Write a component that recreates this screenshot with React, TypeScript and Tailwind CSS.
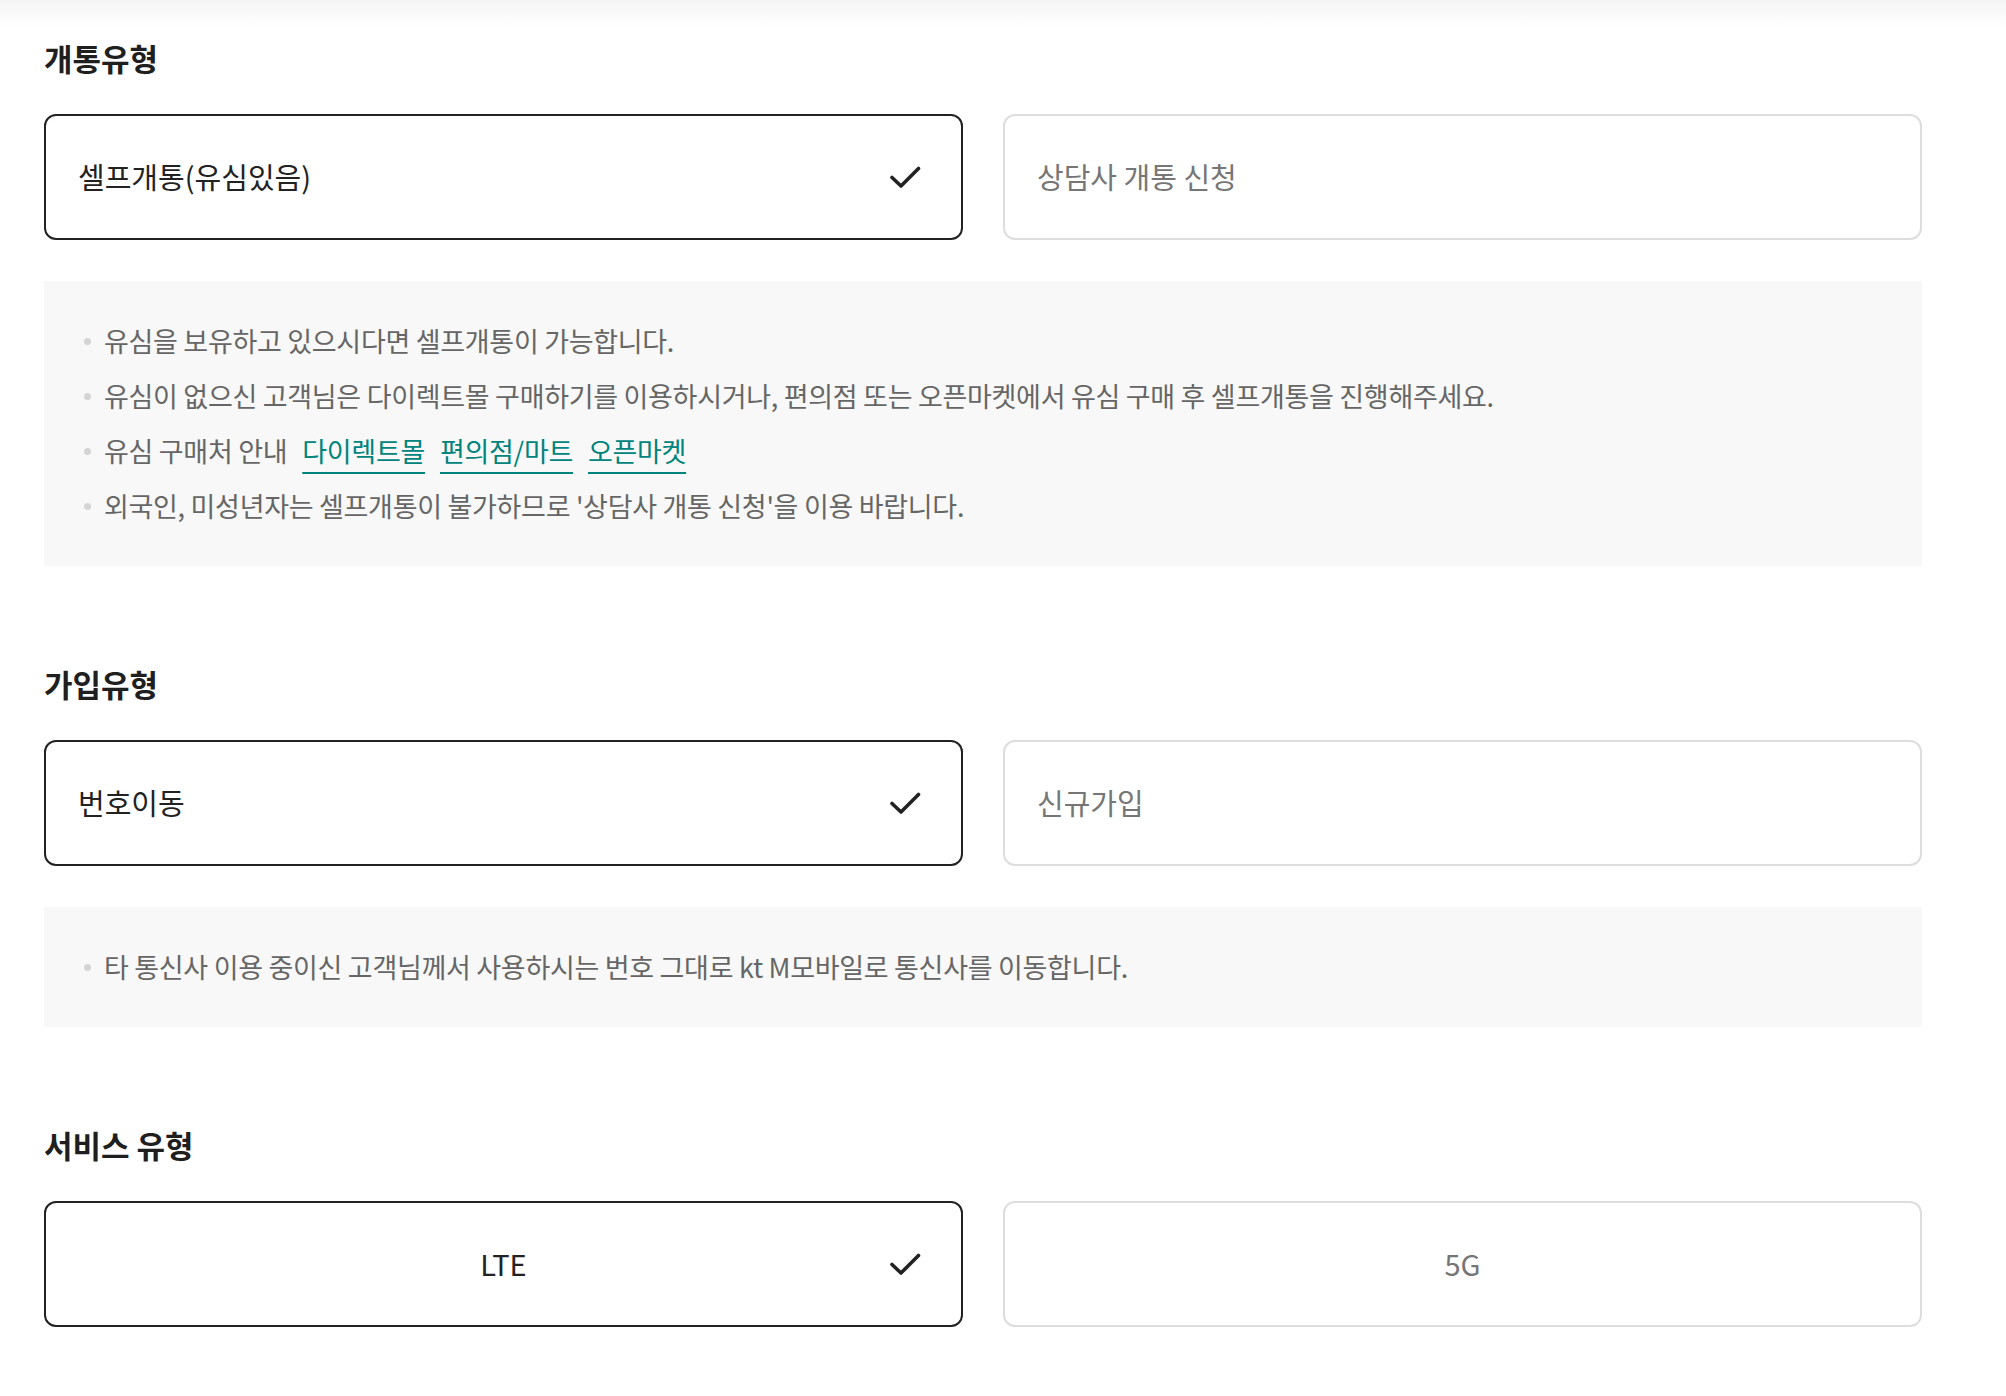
import React from "react";

type Option = { label: string; selected?: boolean };

const font = "font-['Noto_Sans_CJK_KR','Noto_Sans',sans-serif]";

function Check() {
  return (
    <svg width="32" height="24" viewBox="0 0 32 24" fill="none" className="shrink-0">
      <path d="M3 12.5 L12 21 L29.5 3.5" stroke="#222" strokeWidth="3.6" strokeLinecap="round" strokeLinejoin="round" />
    </svg>
  );
}

function OptionBox({ option, center }: { option: Option; center?: boolean }) {
  const base = "relative flex h-[126px] items-center rounded-[12px] border-2 px-[32px] text-[29px]";
  const tone = option.selected ? "border-[#222] text-[#222]" : "border-[#dddddd] text-[#767676]";
  return (
    <div className={`${base} ${tone} ${center ? "justify-center" : "justify-between"}`}>
      <span>{option.label}</span>
      {option.selected &&
        (center ? (
          <span className="absolute right-[40px] top-1/2 -translate-y-1/2">
            <Check />
          </span>
        ) : (
          <span className="mr-[8px]">
            <Check />
          </span>
        ))}
    </div>
  );
}

function Bullet({ children }: { children: React.ReactNode }) {
  return (
    <li className="flex items-center leading-[36px]">
      <span className="mr-[13px] h-[7px] w-[7px] shrink-0 rounded-full bg-[#d4d4d4]" />
      <span className="flex items-center">{children}</span>
    </li>
  );
}

function LinkText({ children }: { children: React.ReactNode }) {
  return (
    <a href="#" className="ml-[15px] text-[#00847c] underline decoration-2 underline-offset-[10px]">
      {children}
    </a>
  );
}

function Section({
  title,
  options,
  center,
  notes,
  className,
}: {
  title: string;
  options: Option[];
  center?: boolean;
  notes?: React.ReactNode[];
  className?: string;
}) {
  return (
    <section className={className}>
      <h2 className="text-[31px] font-bold leading-[42px] text-[#1f1f1f]">{title}</h2>
      <div className="mt-[35px] grid grid-cols-2 gap-[40px]">
        {options.map((o) => (
          <OptionBox key={o.label} option={o} center={center} />
        ))}
      </div>
      {notes && (
        <ul className="mt-[41px] space-y-[19px] bg-[#f8f8f8] py-[42px] pl-[40px] text-[27px] tracking-[-0.3px] text-[#666]">
          {notes.map((n, i) => (
            <Bullet key={i}>{n}</Bullet>
          ))}
        </ul>
      )}
    </section>
  );
}

export default function App() {
  return (
    <div className={`relative min-h-screen bg-white ${font}`}>
      {/* header shadow */}
      <div className="pointer-events-none absolute inset-x-0 top-0 h-[28px] bg-gradient-to-b from-[#f5f5f5] to-white" />

      <div className="relative pl-[44px] pt-[37px]">
        <div className="w-[1878px]">
          <Section
            title="개통유형"
            options={[{ label: "셀프개통(유심있음)", selected: true }, { label: "상담사 개통 신청" }]}
            notes={[
              "유심을 보유하고 있으시다면 셀프개통이 가능합니다.",
              "유심이 없으신 고객님은 다이렉트몰 구매하기를 이용하시거나, 편의점 또는 오픈마켓에서 유심 구매 후 셀프개통을 진행해주세요.",
              <>
                유심 구매처 안내
                <LinkText>다이렉트몰</LinkText>
                <LinkText>편의점/마트</LinkText>
                <LinkText>오픈마켓</LinkText>
              </>,
              "외국인, 미성년자는 셀프개통이 불가하므로 '상담사 개통 신청'을 이용 바랍니다.",
            ]}
          />

          <Section
            className="mt-[97px]"
            title="가입유형"
            options={[{ label: "번호이동", selected: true }, { label: "신규가입" }]}
            notes={["타 통신사 이용 중이신 고객님께서 사용하시는 번호 그대로 kt M모바일로 통신사를 이동합니다."]}
          />

          <Section
            className="mt-[97px]"
            title="서비스 유형"
            center
            options={[{ label: "LTE", selected: true }, { label: "5G" }]}
          />
        </div>
      </div>
    </div>
  );
}
